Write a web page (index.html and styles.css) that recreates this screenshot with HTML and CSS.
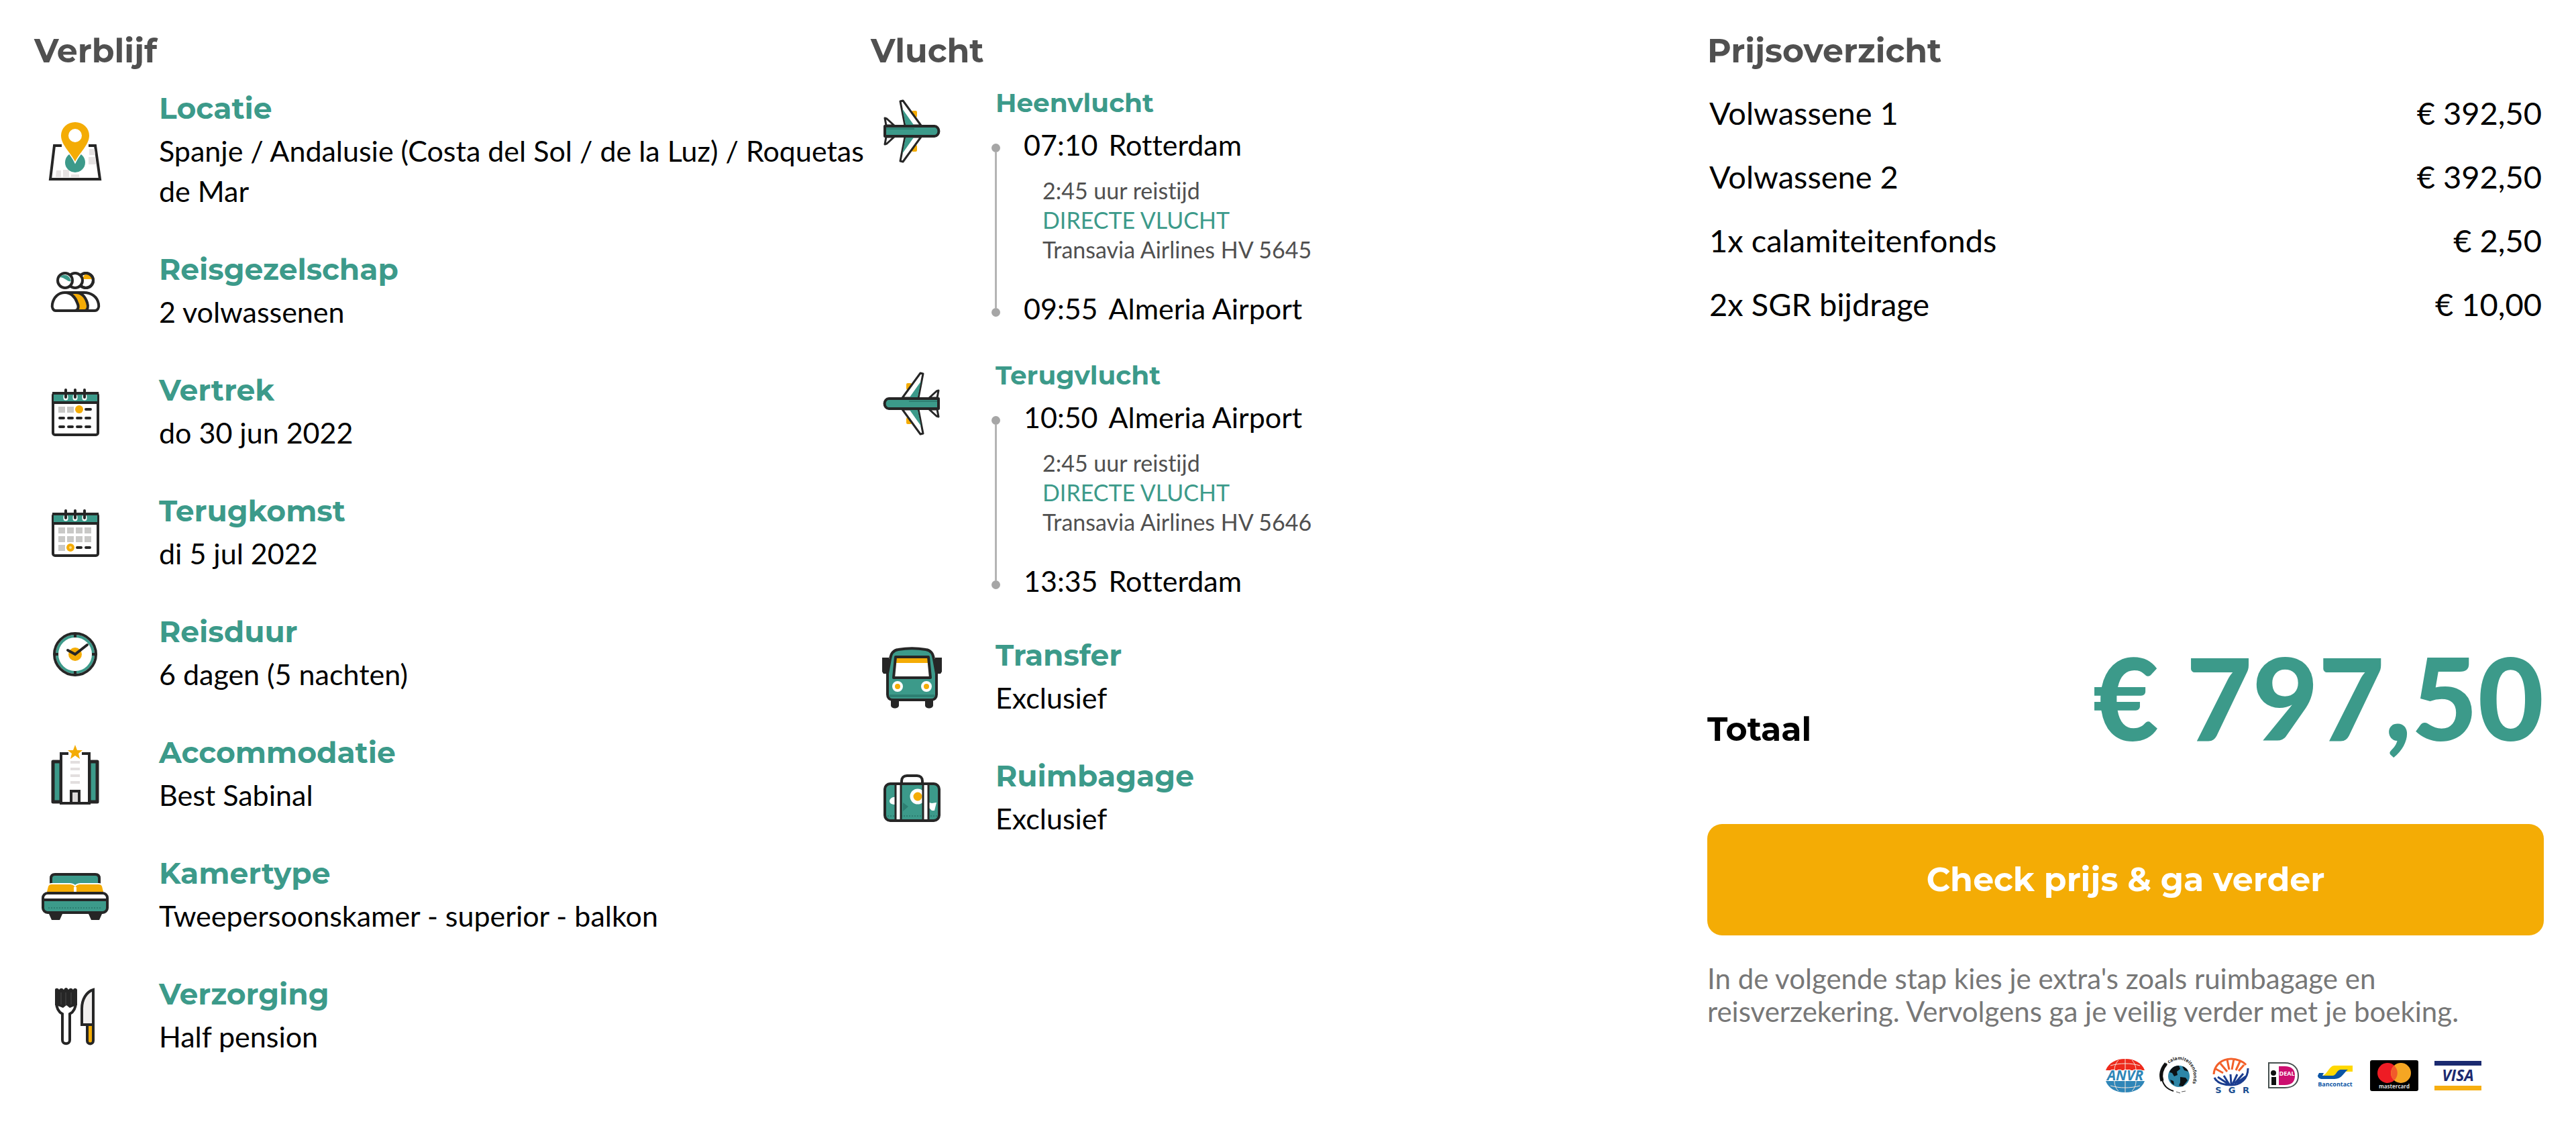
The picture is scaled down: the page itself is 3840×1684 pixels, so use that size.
FILE: index.html
```html
<!DOCTYPE html>
<html lang="nl">
<head>
    <meta charset="UTF-8">
    <meta name="viewport" content="width=device-width, initial-scale=1">
    <title>Reisoverzicht</title>
    <link rel="stylesheet" href="styles.css">
</head>
<body>
    <main class="overview">
        <!-- Verblijf -->
        <section class="column">
            <h2>Verblijf</h2>
            <ul class="details stay">
                <li class="item">
                    <svg class="icon" viewBox="0 0 104 96" aria-hidden="true">
                        <path d="M32 40H21L15 90H89L82 40H72" fill="none" stroke="#262626" stroke-width="4"/>
                        <path d="M73 45h8l1 9h-9zM72 57h10l1 11H72zM24 77h7v10h-8zM34 76h9v11h-9zM46 83h12v4H46z" fill="#e6e3e3"/>
                        <circle cx="52" cy="65" r="15" fill="#3c9a8a"/>
                        <path d="M52 64C46 51 31 39 31 25a21 20 0 0 1 42 0C73 39 58 51 52 64z" fill="#f4ac05" stroke="#fff" stroke-width="3" paint-order="stroke"/>
                        <circle cx="52" cy="25" r="10" fill="#fff"/>
                    </svg>
                    <div>
                        <h3>Locatie</h3>
                        <p>Spanje / Andalusie (Costa del Sol / de la Luz) / Roquetas de Mar</p>
                    </div>
                </li>
                <li class="item">
                    <svg class="icon" viewBox="0 0 104 96" aria-hidden="true">
                        <g stroke="#262626" stroke-width="4">
                            <circle cx="68" cy="31" r="11" fill="#fff"/>
                            <path d="M68 20a11 11 0 0 1 10 9H62z" fill="#f4ac05" stroke="none"/>
                            <circle cx="68" cy="31" r="11" fill="none"/>
                            <circle cx="52" cy="31" r="11" fill="#fff"/>
                            <circle cx="37" cy="31" r="11" fill="#fff"/>
                            <path d="M29 26c5-6 15-4 17 6-5 2-8-5-17-6z" fill="#3c9a8a" stroke="none"/>
                            <path d="M50 76h31c5 0 7-5 6-10-2-11-11-17-22-17H50z" fill="#fff"/>
                            <path d="M40 76h26c5 0 6-6 4-12-3-9-9-15-17-15H40z" fill="#f4ac05"/>
                            <path d="M23 76h28c6 0 7-6 4-12-3-9-10-15-18-15-10 0-17 7-19 17-1 5 1 10 5 10z" fill="#fff"/>
                        </g>
                    </svg>
                    <div>
                        <h3>Reisgezelschap</h3>
                        <p>2 volwassenen</p>
                    </div>
                </li>
                <li class="item">
                    <svg class="icon" viewBox="0 0 104 96" aria-hidden="true">
                        <rect x="19" y="19" width="67" height="62" rx="3" fill="#fff" stroke="#262626" stroke-width="4"/>
                        <path d="M20 20h65v11H20z" fill="#3c9a8a"/>
                        <path d="M18 33h69M18 19h69" stroke="#262626" stroke-width="4"/>
                        <path d="M38 24v2M52 24v2M66 24v2" stroke="#fff" stroke-width="7" stroke-linecap="round"/>
                        <path d="M38 14v11M52 14v11M66 14v11" stroke="#262626" stroke-width="4" stroke-linecap="round"/>
                        <path d="M27 39h10v9H27zM40 39h10v9H40z" fill="#c9c9c7"/>
                        <circle cx="58" cy="43" r="6" fill="#f4ac05"/>
                        <path d="M68 43h7M29 56h6M42 56h6M55 56h6M68 56h6M29 69h6M42 69h6M55 69h6M68 69h6" stroke="#262626" stroke-width="4" stroke-linecap="round"/>
                    </svg>
                    <div>
                        <h3>Vertrek</h3>
                        <p>do 30 jun 2022</p>
                    </div>
                </li>
                <li class="item">
                    <svg class="icon" viewBox="0 0 104 96" aria-hidden="true">
                        <rect x="19" y="19" width="67" height="62" rx="3" fill="#fff" stroke="#262626" stroke-width="4"/>
                        <path d="M20 20h65v11H20z" fill="#3c9a8a"/>
                        <path d="M18 33h69M18 19h69" stroke="#262626" stroke-width="4"/>
                        <path d="M38 24v2M52 24v2M66 24v2" stroke="#fff" stroke-width="7" stroke-linecap="round"/>
                        <path d="M38 14v11M52 14v11M66 14v11" stroke="#262626" stroke-width="4" stroke-linecap="round"/>
                        <path d="M27 39h10v9H27zM40 39h10v9H40zM53 39h10v9H53zM66 39h10v9H66zM27 52h10v9H27zM40 52h10v9H40zM53 52h10v9H53zM66 52h10v9H66zM27 65h10v9H27z" fill="#c9c9c7"/>
                        <circle cx="45" cy="69" r="4" fill="#fbd98a" stroke="#f4ac05" stroke-width="4"/>
                        <path d="M55 69h6M68 69h6" stroke="#262626" stroke-width="4" stroke-linecap="round"/>
                    </svg>
                    <div>
                        <h3>Terugkomst</h3>
                        <p>di 5 jul 2022</p>
                    </div>
                </li>
                <li class="item">
                    <svg class="icon" viewBox="0 0 104 96" aria-hidden="true">
                        <circle cx="52" cy="48" r="27" fill="#fff" stroke="#3c9a8a" stroke-width="4"/>
                        <circle cx="52" cy="48" r="31" fill="none" stroke="#262626" stroke-width="4"/>
                        <path d="M52 16v7M52 73v7M20 48h7M77 48h7" stroke="#262626" stroke-width="4"/>
                        <circle cx="52" cy="48" r="10" fill="#f4ac05"/>
                        <path d="M41 42l11 6 18-14" fill="none" stroke="#262626" stroke-width="4" stroke-linecap="round"/>
                    </svg>
                    <div>
                        <h3>Reisduur</h3>
                        <p>6 dagen (5 nachten)</p>
                    </div>
                </li>
                <li class="item">
                    <svg class="icon" viewBox="0 0 104 96" aria-hidden="true">
                        <path d="M31 28H19v60h12zM73 28h12v60H73z" fill="#3c9a8a" stroke="#262626" stroke-width="5" stroke-linejoin="round"/>
                        <path d="M42 16H31v74h42V16H62" fill="#fff" stroke="#262626" stroke-width="4"/>
                        <path d="M46 72h12v18H46z" fill="#dcdad9" stroke="#262626" stroke-width="4"/>
                        <path d="M45 29h14M45 39h14M45 49h14M45 59h14" stroke="#e2dfdf" stroke-width="4"/>
                        <path d="M52 3l3 8h8l-6 5 2 8-7-5-7 5 2-8-6-5h8z" fill="#f4ac05"/>
                    </svg>
                    <div>
                        <h3>Accommodatie</h3>
                        <p>Best Sabinal</p>
                    </div>
                </li>
                <li class="item">
                    <svg class="icon" viewBox="0 0 104 96" aria-hidden="true">
                        <path d="M16 32V22c0-4 2-6 6-6h60c4 0 6 2 6 6v10" fill="#3c9a8a" stroke="#262626" stroke-width="4"/>
                        <path d="M10 42l2-8c1-2 2-3 5-3h27c4 0 8 2 8 6 0-4 4-6 8-6h27c3 0 4 1 5 3l2 8z" fill="#f4ac05" stroke="#fff" stroke-width="4" paint-order="stroke"/>
                        <path d="M52 35v7" stroke="#fff" stroke-width="4"/>
                        <rect x="4" y="44" width="96" height="29" rx="7" fill="#fff"/>
                        <path d="M5 55h94v12c0 3-2 6-5 6H10c-3 0-5-3-5-6z" fill="#3c9a8a"/>
                        <rect x="4" y="44" width="96" height="29" rx="7" fill="none" stroke="#262626" stroke-width="4"/>
                        <path d="M3 54h98" stroke="#262626" stroke-width="4"/>
                        <path d="M12 66h80" stroke="#2d7f72" stroke-width="2" stroke-dasharray="2 2"/>
                        <path d="M13 75h20l-4 9H17zM72 75h20l-4 9H76z" fill="#262626"/>
                    </svg>
                    <div>
                        <h3>Kamertype</h3>
                        <p>Tweepersoonskamer - superior - balkon</p>
                    </div>
                </li>
                <li class="item">
                    <svg class="icon" viewBox="0 0 104 96" aria-hidden="true">
                        <path d="M24 26c0 10 3 15 9 18v39c0 7 11 7 11 0V44c6-3 9-8 9-18" fill="#fff" stroke="#262626" stroke-width="4"/>
                        <path d="M22 8c0-3 5-3 6 0 2-3 5-3 7 0 2-4 5-4 7 0 2-3 5-3 7 0 1-3 5-3 6 0v23l-6 2-5 2-5-4-5 4-5-2-7-2z" fill="#262626"/>
                        <path d="M31 12v18M38 12v20M46 12v18" stroke="#4a4a4a" stroke-width="1"/>
                        <path d="M79 8v52H62V36c0-14 7-25 17-28z" fill="#f1efee" stroke="#262626" stroke-width="4"/>
                        <path d="M70 60h9v24c0 6-9 6-9 0z" fill="#f4ac05" stroke="#262626" stroke-width="4"/>
                    </svg>
                    <div>
                        <h3>Verzorging</h3>
                        <p>Half pension</p>
                    </div>
                </li>
            </ul>
        </section>

        <!-- Vlucht -->
        <section class="column">
            <h2>Vlucht</h2>
            <ul class="details">
                <li class="item flight">
                    <svg class="icon" viewBox="0 0 104 96" aria-hidden="true">
                        <g id="plane" stroke="#262626" stroke-width="3" stroke-linejoin="round">
                            <path d="M54 20h4v6h-3zM54 77h4v-6h-3z" fill="#f4ac05" stroke="#f4ac05" stroke-width="4"/>
                            <path d="M42 40L35 4l4-1 27 37zM42 57l-7 36 4 1 27-37z" fill="#fff"/>
                            <path d="M43 39L38 15l17 24zM43 58l-5 24 17-24z" fill="#3c9a8a" stroke="none"/>
                            <path d="M14 40l-2-11 3 1 11 10zM14 57l-2 11 3-1 11-10z" fill="#fff"/>
                            <path d="M12 41h74a6 7 0 0 1 0 15H12z" fill="#3c9a8a" stroke-width="4"/>
                            <path d="M14 45h42" stroke="#2d7f72" stroke-width="2"/>
                        </g>
                    </svg>
                    <div>
                        <h3>Heenvlucht</h3>
                        <div class="route">
                            <div class="rail"><span class="dot"></span><span class="line"></span><span class="dot"></span></div>
                            <div>
                                <p class="stop"><time>07:10</time><span>Rotterdam</span></p>
                                <div class="leg">
                                    <p>2:45 uur reistijd</p>
                                    <p class="direct">DIRECTE VLUCHT</p>
                                    <p>Transavia Airlines HV 5645</p>
                                </div>
                                <p class="stop"><time>09:55</time><span>Almeria Airport</span></p>
                            </div>
                        </div>
                    </div>
                </li>
                <li class="item flight">
                    <svg class="icon" viewBox="0 0 104 96" aria-hidden="true">
                        <use href="#plane" transform="translate(104 0) scale(-1 1)"/>
                    </svg>
                    <div>
                        <h3>Terugvlucht</h3>
                        <div class="route">
                            <div class="rail"><span class="dot"></span><span class="line"></span><span class="dot"></span></div>
                            <div>
                                <p class="stop"><time>10:50</time><span>Almeria Airport</span></p>
                                <div class="leg">
                                    <p>2:45 uur reistijd</p>
                                    <p class="direct">DIRECTE VLUCHT</p>
                                    <p>Transavia Airlines HV 5646</p>
                                </div>
                                <p class="stop"><time>13:35</time><span>Rotterdam</span></p>
                            </div>
                        </div>
                    </div>
                </li>
                <li class="item">
                    <svg class="icon" viewBox="0 0 104 96" aria-hidden="true">
                        <path d="M8 18h10v24h-8l-2-3zM97 18H87v24h8l2-3zM21 78h12v11c0 6-12 6-12 0zM72 78h12v11c0 6-12 6-12 0z" fill="#262626"/>
                        <path d="M32 6c12-2 29-2 41 0 8 1 11 6 12 14l4 22v31c0 5-3 8-8 8H24c-5 0-8-3-8-8V42l4-22c1-8 4-13 12-14z" fill="#3c9a8a" stroke="#262626" stroke-width="4"/>
                        <path d="M19 75h67" stroke="#2d7f72" stroke-width="4"/>
                        <path d="M28 17h49l3 31H25z" fill="#fff"/>
                        <path d="M28 18h49v8H27z" fill="#f4ac05"/>
                        <path d="M28 17h49l3 31H25z" fill="none" stroke="#262626" stroke-width="4" stroke-linejoin="round"/>
                        <g fill="#f4ac05" stroke="#fff" stroke-width="4">
                            <circle cx="31" cy="61" r="6"/>
                            <circle cx="74" cy="61" r="6"/>
                        </g>
                    </svg>
                    <div>
                        <h3>Transfer</h3>
                        <p>Exclusief</p>
                    </div>
                </li>
                <li class="item">
                    <svg class="icon" viewBox="0 0 104 96" aria-hidden="true">
                        <path d="M37 25v-3c0-5 3-8 8-8h15c5 0 8 3 8 8v3" fill="#fff" stroke="#262626" stroke-width="4"/>
                        <rect x="12" y="26" width="81" height="55" rx="8" fill="#3c9a8a"/>
                        <circle cx="61" cy="45" r="9" fill="#f4ac05" stroke="#fff" stroke-width="5"/>
                        <path d="M28 46c-5-1-9 3-9 6s3 5 9 5zM78 54l4 1 7-1-3 12h-4l-4-4z" fill="#fff"/>
                        <path d="M39 54l8 6-8 7z" fill="#2d7f72"/>
                        <path d="M16 74h74" stroke="#2d7f72" stroke-width="2" stroke-dasharray="2 2"/>
                        <path d="M28 26h8v55h-8zM69 26h8v55h-8z" fill="#fff" stroke="#262626" stroke-width="3"/>
                        <rect x="12" y="26" width="81" height="55" rx="8" fill="none" stroke="#262626" stroke-width="4"/>
                    </svg>
                    <div>
                        <h3>Ruimbagage</h3>
                        <p>Exclusief</p>
                    </div>
                </li>
            </ul>
        </section>

        <!-- Prijsoverzicht -->
        <section class="column">
            <h2>Prijsoverzicht</h2>
            <table class="prices">
                <tbody>
                    <tr>
                        <td>Volwassene 1</td>
                        <td class="amount">€ 392,50</td>
                    </tr>
                    <tr>
                        <td>Volwassene 2</td>
                        <td class="amount">€ 392,50</td>
                    </tr>
                    <tr>
                        <td>1x calamiteitenfonds</td>
                        <td class="amount">€ 2,50</td>
                    </tr>
                    <tr>
                        <td>2x SGR bijdrage</td>
                        <td class="amount">€ 10,00</td>
                    </tr>
                </tbody>
            </table>
            <div class="total">
                <span class="total-label">Totaal</span>
                <strong class="total-price">€ 797,50</strong>
            </div>
            <button class="check-button" type="button">Check prijs &amp; ga verder</button>
            <p class="note">In de volgende stap kies je extra's zoals ruimbagage en reisverzekering. Vervolgens ga je veilig verder met je boeking.</p>

            <!-- Keurmerken en betaalmethoden -->
            <div class="logos">
                <svg width="60" height="54" viewBox="0 0 60 54" role="img" aria-label="ANVR">
                    <path d="M1 19C5 8 16 2 30 2s25 6 29 17z" fill="#ee2a1c"/>
                    <path d="M1 35c4 11 15 17 29 17s25-6 29-17z" fill="#2f86b8"/>
                    <path d="M30 2v17M30 35v17M20 4c-4 4-6 9-6 15M40 4c4 4 6 9 6 15M20 50c-4-4-6-9-6-15M40 50c4-4 6-9 6-15M8 12c14-4 30-4 44 0M8 42c14 4 30 4 44 0" fill="none" stroke="#f7e6dc" stroke-width="1"/>
                    <text class="logo-text" x="30" y="34" font-size="21" fill="#2f86b8" stroke="#fff" stroke-width="2" font-style="italic">ANVR</text>
                </svg>
                <svg width="56" height="54" viewBox="0 0 56 54" role="img" aria-label="Calamiteitenfonds">
                    <path d="M10 9C-2 22 0 44 20 50" fill="none" stroke="#111" stroke-width="2"/>
                    <path d="M9 9C2 17 0 26 3 35" fill="none" stroke="#111" stroke-width="5"/>
                    <path d="M24 51l6 2M32 51l6-1" stroke="#555" stroke-width="1"/>
                    <path id="calamity" d="M13 9C28-2 44 4 49 20c2 8 1 18-4 26" fill="none"/>
                    <text font-family="Open Sans, sans-serif" font-size="7" font-weight="700" fill="#222"><textPath href="#calamity">calamiteitenfonds</textPath></text>
                    <circle cx="28" cy="28" r="16" fill="#2d86a8"/>
                    <path d="M14 22c2-6 7-10 14-10l2 5-5 4 1 5-5 2-3-5zM33 13c4 1 8 4 9 8l-6-2zM30 29l8 1 3 4-7 9-6-1 2-5zM15 33l5 2 1 6-4-3z" fill="#0c1114"/>
                </svg>
                <svg width="60" height="54" viewBox="0 0 60 54" role="img" aria-label="SGR">
                    <g fill="none" stroke="#f2602a" stroke-width="3">
                        <path d="M2 25C3 11 14 2 28 2c9 0 18 4 22 9M5 17l11 6M12 9l10 12M22 3l3 15M32 2l-3 16M41 6l-6 13M47 11l-8 9"/>
                    </g>
                    <g fill="none" stroke="#1b3d8f" stroke-width="3">
                        <path d="M3 30c4 8 14 11 25 11 14 0 25-9 25-25M8 29l15 10M17 27l8 13M27 25l1 15M37 25l-7 15M46 24L33 39M50 28l-14 10"/>
                    </g>
                    <text class="sgr-text" y="53"><tspan x="9">S</tspan><tspan x="29">G</tspan><tspan x="50">R</tspan></text>
                </svg>
                <svg width="48" height="54" viewBox="0 0 48 54" role="img" aria-label="iDEAL">
                    <path d="M2 8h24c13 0 20 8 20 19s-7 18-20 18H2z" fill="#fff" stroke="#46504f" stroke-width="2"/>
                    <path d="M17 13h9c10 0 15 5 15 14s-5 14-15 14h-9z" fill="#cc0f70"/>
                    <circle cx="9" cy="23" r="4" fill="#111"/>
                    <path d="M6 29h7v12H6z" fill="#111"/>
                    <text class="logo-text" x="29" y="27" font-size="9" fill="#fff">DEAL</text>
                </svg>
                <svg width="60" height="54" viewBox="0 0 60 54" role="img" aria-label="Bancontact">
                    <path d="M30 12h27v9H43c-5 0-8 6-12 6H12c7-1 10-15 18-15z" fill="#ffd800"/>
                    <path d="M7 23h7l-2 4h16c4 0 6-9 11-9h11c-6 4-9 14-20 14H12c-4 0-7-2-7-5z" fill="#0a55a5"/>
                    <text class="logo-text" x="31" y="43" font-size="9" fill="#0a55a5">Bancontact</text>
                </svg>
                <svg width="74" height="54" viewBox="0 0 74 54" role="img" aria-label="Mastercard">
                    <rect x="1" y="4" width="72" height="46" rx="3" fill="#000"/>
                    <circle cx="27" cy="23" r="15" fill="#ee1c24"/>
                    <circle cx="47" cy="23" r="15" fill="#f5a623"/>
                    <path d="M37 12a15 15 0 0 1 0 22 15 15 0 0 1 0-22z" fill="#f15a2b"/>
                    <text class="logo-text" x="37" y="46" font-size="8" fill="#ddd">mastercard</text>
                </svg>
                <svg width="72" height="54" viewBox="0 0 72 54" role="img" aria-label="Visa">
                    <path d="M1 5h70v7H1z" fill="#1b2a70"/>
                    <path d="M1 42h70v7H1z" fill="#f6ae10"/>
                    <text class="logo-text" x="36" y="35" font-size="23" fill="#1b2a70" font-style="italic">VISA</text>
                </svg>
            </div>
        </section>
    </main>
</body>
</html>
```
FILE: styles.css
```css
:root {
    --green: #3c9a8a;
    --orange: #f4ac05;
    --heading: #505050;
    --muted: #777;
    --text-font: Lato, "Open Sans", sans-serif;
    --title-font: Montserrat, Inter, sans-serif;
}

* {
    box-sizing: border-box;
}

body {
    margin: 0;
    background: #fff;
    color: #000;
    font-family: var(--text-font);
    font-size: 43px;
    font-variant-ligatures: none;
    line-height: 60px;
}

h2, h3, p, ul {
    margin: 0;
    padding: 0;
}

.overview {
    display: grid;
    grid-template-columns: repeat(3, 1fr);
    padding: 46px 48px 46px 51px;
}

h2 {
    margin-bottom: 14px;
    color: var(--heading);
    font-family: var(--title-font);
    font-size: 49px;
    line-height: 60px;
}

/* Lijst met icoon, titel en tekst */
.details {
    display: flex;
    flex-direction: column;
    gap: 52px;
    list-style: none;
}
.stay {
    padding-top: 7px;
}
.item {
    display: grid;
    grid-template-columns: 122px 1fr;
    column-gap: 64px;
    align-items: center;
}
.icon {
    width: 104px;
    height: 96px;
    margin-top: 8px;
    justify-self: center;
}
.item h3 {
    color: var(--green);
    font-family: var(--title-font);
    font-size: 44px;
    line-height: 68px;
}

/* Vluchten */
.flight {
    align-items: start;
}
.flight + .flight {
    margin: -16px 0 -6px;
}
.flight .icon {
    margin-top: 27px;
}
.flight h3 {
    font-size: 39px;
    line-height: 66px;
}
.route {
    display: grid;
    grid-template-columns: 13px 1fr;
    column-gap: 35px;
    margin-left: -6px;
}
.rail {
    display: flex;
    flex-direction: column;
    align-items: center;
    padding: 28px 0 18px;
}
.dot {
    width: 13px;
    height: 13px;
    border-radius: 50%;
    background: #a6a6a6;
}
.line {
    flex: 1;
    width: 3px;
    background: #b4b4b4;
}
.stop {
    display: flex;
    gap: 16px;
}
.leg {
    padding: 16px 0 36px 28px;
    color: var(--heading);
    font-size: 34px;
    line-height: 44px;
}
.direct {
    color: var(--green);
}

/* Prijzen */
.prices {
    width: 100%;
    border-collapse: collapse;
    font-size: 47px;
}
.prices td {
    height: 95px;
    padding: 0 3px;
}
.prices .amount {
    text-align: right;
}
.total {
    display: flex;
    justify-content: space-between;
    align-items: baseline;
    margin: 436px 0 88px;
}
.total-label {
    font-family: var(--title-font);
    font-size: 49px;
    font-weight: 700;
}
.total-price {
    color: var(--green);
    font-size: 170px;
    font-weight: 900;
    line-height: 204px;
}
.check-button {
    display: block;
    width: 100%;
    padding: 53px 24px;
    border: none;
    border-radius: 22px;
    background: var(--orange);
    color: #fff;
    font-family: var(--title-font);
    font-size: 49px;
    font-weight: 700;
    line-height: 60px;
    cursor: pointer;
}
.check-button:hover {
    filter: brightness(1.05);
}
.note {
    margin-top: 40px;
    color: var(--muted);
    font-size: 42px;
    line-height: 49px;
}

.logos {
    display: flex;
    justify-content: flex-end;
    gap: 22px;
    margin-top: 44px;
    padding-right: 92px;
}
.logos svg {
    overflow: visible;
}
.logo-text {
    font-family: "Open Sans", sans-serif;
    font-weight: 700;
    text-anchor: middle;
    paint-order: stroke;
}
.sgr-text {
    fill: #1b4f91;
    font-family: "DejaVu Sans", sans-serif;
    font-size: 13px;
    font-weight: 700;
    text-anchor: middle;
}
```
